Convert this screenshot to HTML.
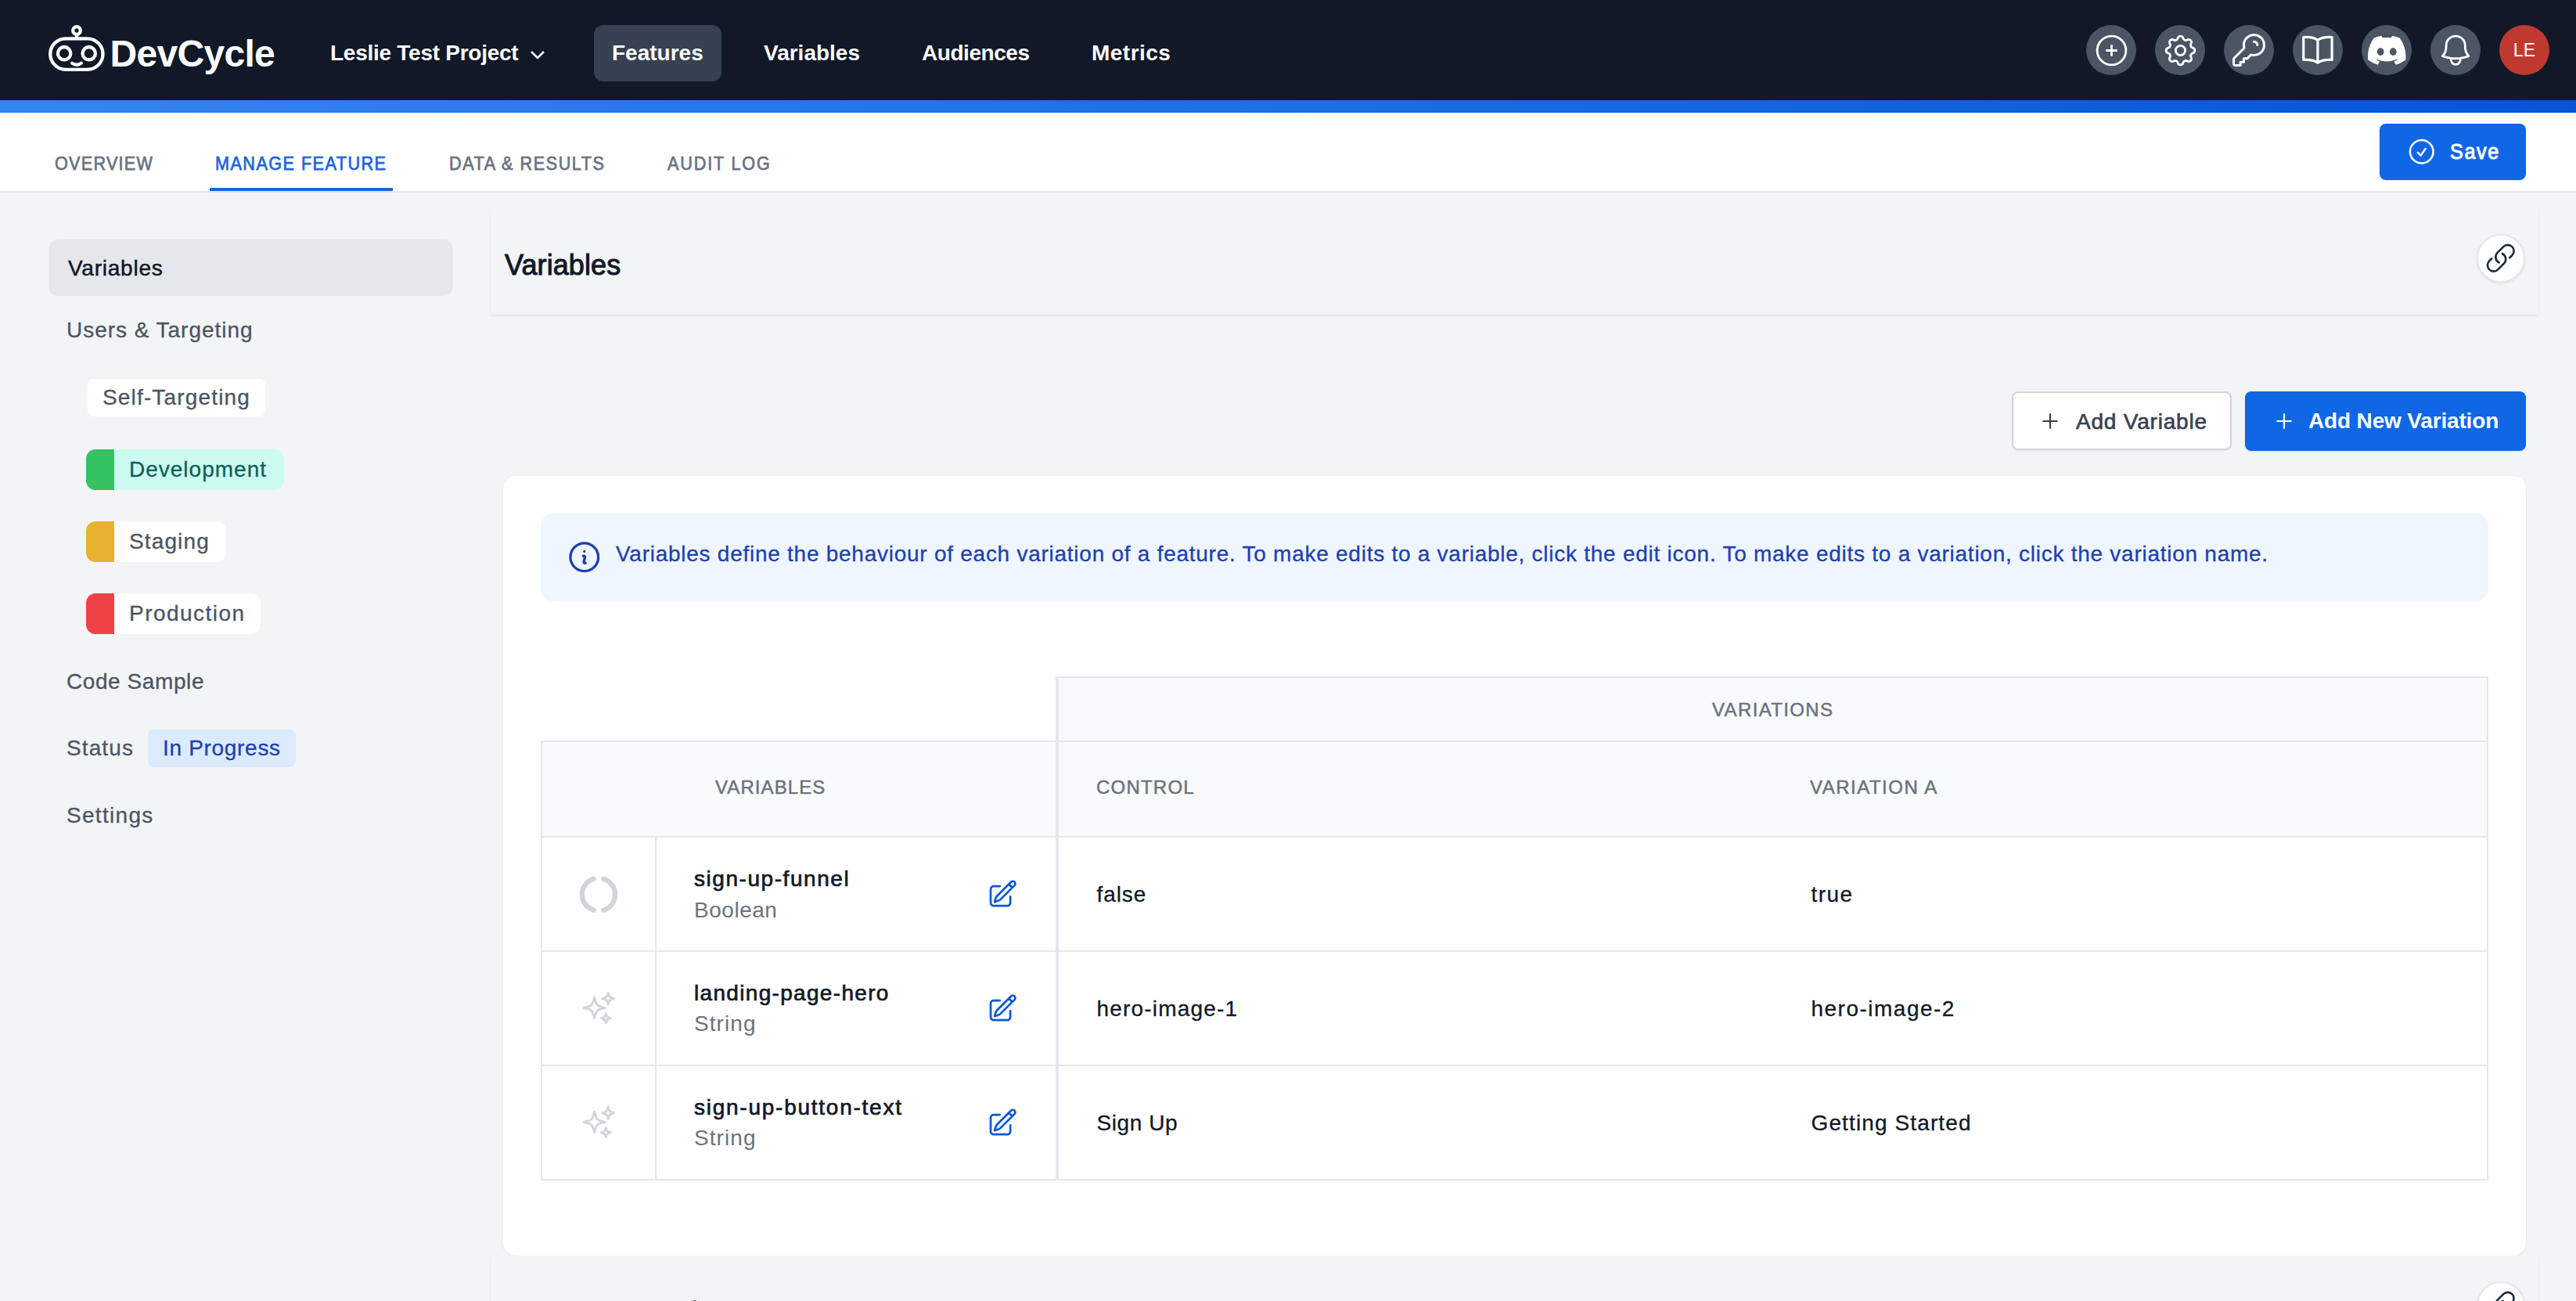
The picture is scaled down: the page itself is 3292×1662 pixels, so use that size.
<!DOCTYPE html>
<html><head><meta charset="utf-8">
<style>
*{box-sizing:border-box;margin:0;padding:0}
html,body{width:3292px;height:1662px;overflow:hidden;background:#f3f4f6;font-family:"Liberation Sans",sans-serif;}
.a{position:absolute}
.t{position:absolute;white-space:nowrap;line-height:1}
svg{position:absolute;overflow:visible}
#nav{left:0;top:0;width:3292px;height:128px;background:#111827}
#bar{left:0;top:128px;width:3292px;height:16px;background:linear-gradient(90deg,#3385ef 0%,#1d6ee1 50%,#0454d5 100%)}
#tabs{left:0;top:144px;width:3292px;height:102px;background:#fff;border-bottom:2px solid #e5e7eb}
.nv{font-size:28px;font-weight:700;color:#fff}
.ic{width:64px;height:64px;border-radius:50%;background:#4b5563;top:32px}
.tab{font-size:24px;font-weight:400;color:#6b7280;-webkit-text-stroke:0.75px currentColor;transform:scaleX(0.9);transform-origin:0 0}
.sb{font-size:28px;color:#4b5563;-webkit-text-stroke:0.3px currentColor}
.env{height:52px;border-radius:12px;background:#fff;overflow:hidden}
.env i{position:absolute;left:0;top:0;bottom:0;width:36px}
.th{font-size:24px;color:#6b7280;-webkit-text-stroke:0.5px currentColor}
.vn{font-size:28px;color:#111827;-webkit-text-stroke:0.7px currentColor}
.vv{font-size:28px;color:#111827;-webkit-text-stroke:0.3px currentColor}
.vt{font-size:28px;color:#6b7280}
.hl{background:#e5e7eb}
.wi{fill:none;stroke:#fff;stroke-linecap:round;stroke-linejoin:round}
</style></head><body>
<!-- NAV -->
<div id="nav" class="a"></div>
<div id="bar" class="a"></div>
<div id="tabs" class="a"></div>

<!-- logo -->
<svg style="left:0;top:0" width="160" height="110" viewBox="0 0 160 110">
  <g fill="none" stroke="#fff" stroke-width="4.3" stroke-linecap="round">
    <circle cx="98" cy="39" r="4.8"/>
    <line x1="98" y1="44" x2="98" y2="49"/>
    <rect x="64.2" y="49.3" width="67.3" height="39.6" rx="19.8"/>
    <circle cx="82.1" cy="68.2" r="8.2"/>
    <circle cx="113.7" cy="68.2" r="8.2"/>
    <path d="M92.2 80.8 Q98 84.6 103.8 80.8"/>
  </g>
</svg>
<div class="t" style="left:140.5px;top:45px;font-size:48px;font-weight:700;color:#fff;letter-spacing:-0.7px">DevCycle</div>

<div class="t nv" style="left:422px;top:54px;letter-spacing:-0.26px">Leslie Test Project</div>
<svg style="left:676px;top:62px" width="22" height="16" viewBox="0 0 22 16"><path d="M3 4 L11 12 L19 4" fill="none" stroke="#fff" stroke-width="2.6"/></svg>
<div class="a" style="left:759px;top:32px;width:163px;height:72px;border-radius:12px;background:#374151"></div>
<div class="t nv" style="left:782px;top:54px">Features</div>
<div class="t nv" style="left:976px;top:54px">Variables</div>
<div class="t nv" style="left:1178px;top:54px;letter-spacing:-0.45px">Audiences</div>
<div class="t nv" style="left:1395px;top:54px;letter-spacing:0.47px">Metrics</div>

<div class="a ic" style="left:2666px"></div>
<div class="a ic" style="left:2754px"></div>
<div class="a ic" style="left:2842px"></div>
<div class="a ic" style="left:2930px"></div>
<div class="a ic" style="left:3018px"></div>
<div class="a ic" style="left:3106px"></div>
<div class="a ic" style="left:3194px;background:#c0392f"></div>
<div class="t" style="left:3194px;top:53px;width:64px;text-align:center;font-size:23px;color:#fff;letter-spacing:0.3px">LE</div>

<!-- nav icons: 24-unit heroicons at scale 2.17 (52px) -->
<svg style="left:2673.5px;top:39.5px" width="49" height="49" viewBox="0 0 24 24"><path class="wi" stroke-width="1.4" d="M12 9v3m0 0v3m0-3h3m-3 0H9m12 0a9 9 0 11-18 0 9 9 0 0118 0z"/></svg>
<svg style="left:2761.5px;top:39.5px" width="49" height="49" viewBox="0 0 24 24"><path class="wi" stroke-width="1.4" d="M10.325 4.317c.426-1.756 2.924-1.756 3.35 0a1.724 1.724 0 002.573 1.066c1.543-.94 3.31.826 2.37 2.37a1.724 1.724 0 001.065 2.572c1.756.426 1.756 2.924 0 3.35a1.724 1.724 0 00-1.066 2.573c.94 1.543-.826 3.31-2.37 2.37a1.724 1.724 0 00-2.572 1.065c-.426 1.756-2.924 1.756-3.35 0a1.724 1.724 0 00-2.573-1.066c-1.543.94-3.31-.826-2.37-2.37a1.724 1.724 0 00-1.065-2.572c-1.756-.426-1.756-2.924 0-3.35a1.724 1.724 0 001.066-2.573c-.94-1.543.826-3.31 2.37-2.37.996.608 2.296.07 2.572-1.065z"/><path class="wi" stroke-width="1.4" d="M15 12a3 3 0 11-6 0 3 3 0 016 0z"/></svg>
<svg style="left:2848px;top:38px" width="52" height="52" viewBox="0 0 24 24"><path class="wi" stroke-width="1.4" d="M15 7a2 2 0 012 2m4 0a6 6 0 01-7.743 5.743L11 17H9v2H7v2H4a1 1 0 01-1-1v-2.586a1 1 0 01.293-.707l5.964-5.964A6 6 0 1121 9z"/></svg>
<svg style="left:2940px;top:44px" width="44" height="40" viewBox="0 0 44 40"><path fill="none" stroke="#fff" stroke-width="3.2" stroke-linejoin="round" d="M3.75 3.5 C11.75 3.0 17.75 3.8 21.9 7.4 C26.05 3.8 32.05 3.0 40.1 3.5 V32.4 C32.05 31.9 26.05 32.7 21.9 36.2 C17.75 32.7 11.75 31.9 3.75 32.4 Z M21.9 7.4 V36.2"/></svg>
<svg style="left:3025.5px;top:40px" width="48.5" height="48.5" viewBox="0 0 24 24"><path fill="#fff" d="M20.317 4.3698a19.7913 19.7913 0 00-4.8851-1.5152.0741.0741 0 00-.0785.0371c-.211.3753-.4447.8648-.6083 1.2495-1.8447-.2762-3.68-.2762-5.4868 0-.1636-.3933-.4058-.8742-.6177-1.2495a.077.077 0 00-.0785-.037 19.7363 19.7363 0 00-4.8852 1.515.0699.0699 0 00-.0321.0277C.5334 9.0458-.319 13.5799.0992 18.0578a.0824.0824 0 00.0312.0561c2.0528 1.5076 4.0413 2.4228 5.9929 3.0294a.0777.0777 0 00.0842-.0276c.4616-.6304.8731-1.2952 1.226-1.9942a.076.076 0 00-.0416-.1057c-.6528-.2476-1.2743-.5495-1.8722-.8923a.077.077 0 01-.0076-.1277c.1258-.0943.2517-.1923.3718-.2914a.0743.0743 0 01.0776-.0105c3.9278 1.7933 8.18 1.7933 12.0614 0a.0739.0739 0 01.0785.0095c.1202.099.246.1981.3728.2924a.077.077 0 01-.0066.1276 12.2986 12.2986 0 01-1.873.8914.0766.0766 0 00-.0407.1067c.3604.698.7719 1.3628 1.225 1.9932a.076.076 0 00.0842.0286c1.961-.6067 3.9495-1.5219 6.0023-3.0294a.077.077 0 00.0313-.0552c.5004-5.177-.8382-9.6739-3.5485-13.6604a.061.061 0 00-.0312-.0286zM8.02 15.3312c-1.1825 0-2.1569-1.0857-2.1569-2.419 0-1.3332.9555-2.4189 2.157-2.4189 1.2108 0 2.1757 1.0952 2.1568 2.419 0 1.3332-.9555 2.4189-2.1569 2.4189zm7.9748 0c-1.1825 0-2.1569-1.0857-2.1569-2.419 0-1.3332.9554-2.4189 2.1569-2.4189 1.2108 0 2.1757 1.0952 2.1568 2.419 0 1.3332-.946 2.4189-2.1568 2.4189z"/></svg>
<svg style="left:3113.6px;top:39.6px" width="48.4" height="48.4" viewBox="0 0 24 24"><path class="wi" stroke-width="1.4" d="M14.857 17.082a23.848 23.848 0 0 0 5.454-1.31A8.967 8.967 0 0 1 18 9.75V9A6 6 0 0 0 6 9v.75a8.967 8.967 0 0 1-2.312 6.022c1.733.64 3.56 1.085 5.455 1.31m5.714 0a24.255 24.255 0 0 1-5.714 0m5.714 0a3 3 0 1 1-5.714 0"/></svg>

<!-- TABS -->
<div class="t tab" style="left:70px;top:197px;letter-spacing:1.41px">OVERVIEW</div>
<div class="t tab" style="left:275px;top:197px;color:#1d64d8;letter-spacing:1.64px">MANAGE FEATURE</div>
<div class="t tab" style="left:574px;top:197px;letter-spacing:1.74px">DATA &amp; RESULTS</div>
<div class="t tab" style="left:853px;top:197px;letter-spacing:2.05px">AUDIT LOG</div>
<div class="a" style="left:268px;top:240px;width:234px;height:4px;background:#1d64d8"></div>

<div class="a" style="left:3041px;top:158px;width:187px;height:72px;border-radius:8px;background:#0f67e6;box-shadow:0 1px 2px rgba(0,0,0,0.08)"></div>
<svg style="left:3075.25px;top:174.25px" width="39.5" height="39.5" viewBox="0 0 24 24"><path class="wi" stroke-width="1.52" d="M9 12.75 11.25 15 15 9.75M21 12a9 9 0 1 1-18 0 9 9 0 0 1 18 0Z"/></svg>
<div class="t" style="left:3131px;top:180px;font-size:28px;font-weight:400;color:#fff;letter-spacing:1.83px;-webkit-text-stroke:1px #fff;transform:scaleX(0.9);transform-origin:0 0">Save</div>

<!-- SIDEBAR -->
<div class="a" style="left:62px;top:306px;width:517px;height:72px;border-radius:12px;background:#e5e7eb"></div>
<div class="t sb" style="left:87px;top:329px;color:#111827;letter-spacing:0.76px;-webkit-text-stroke:0.5px #111827">Variables</div>
<div class="t sb" style="left:85px;top:408px;letter-spacing:0.97px">Users &amp; Targeting</div>
<div class="a" style="left:112px;top:484px;width:227px;height:48px;border-radius:8px;background:#fff"></div>
<div class="t sb" style="left:131px;top:494px;letter-spacing:1.16px">Self-Targeting</div>
<div class="a env" style="left:110px;top:574px;width:253px;background:#ccfbf1"><i style="background:#34c263"></i></div>
<div class="t sb" style="left:165px;top:586px;color:#115e59;letter-spacing:1px">Development</div>
<div class="a env" style="left:110px;top:666px;width:179px"><i style="background:#e8b130"></i></div>
<div class="t sb" style="left:165px;top:678px;letter-spacing:1.13px">Staging</div>
<div class="a env" style="left:110px;top:758px;width:223px"><i style="background:#ef4146"></i></div>
<div class="t sb" style="left:165px;top:770px;letter-spacing:1.46px">Production</div>
<div class="t sb" style="left:85px;top:857px;letter-spacing:0.58px">Code Sample</div>
<div class="t sb" style="left:85px;top:942px;letter-spacing:1.1px">Status</div>
<div class="a" style="left:189px;top:932px;width:189px;height:48px;border-radius:8px;background:#dbeafe"></div>
<div class="t sb" style="left:208px;top:942px;color:#1e40af;letter-spacing:0.69px">In Progress</div>
<div class="t sb" style="left:85px;top:1028px;letter-spacing:1.31px">Settings</div>

<!-- MAIN -->
<div class="a" style="left:627px;top:266px;width:2617px;height:136px;background:#f3f4f6;box-shadow:0 2px 3px rgba(0,0,0,0.06)"></div>
<div class="t" style="left:645px;top:321px;font-size:36px;color:#111827;letter-spacing:0.1px;-webkit-text-stroke:1px #111827">Variables</div>
<div class="a" style="left:3165px;top:299px;width:62px;height:62px;border-radius:50%;background:#fff;border:2px solid #e5e7eb;box-shadow:0 1px 3px rgba(0,0,0,0.1)"></div>
<svg style="left:3175.25px;top:308.95px" width="41.5" height="41.5" viewBox="0 0 24 24"><path fill="none" stroke="#1f2937" stroke-width="1.5" stroke-linecap="round" stroke-linejoin="round" d="M13.19 8.688a4.5 4.5 0 0 1 1.242 7.244l-4.5 4.5a4.5 4.5 0 0 1-6.364-6.364l1.757-1.757m13.35-.622 1.757-1.757a4.5 4.5 0 0 0-6.364-6.364l-4.5 4.5a4.5 4.5 0 0 0 1.242 7.244"/></svg>

<div class="a" style="left:2571px;top:500px;width:281px;height:75px;border-radius:8px;background:#fff;border:2px solid #d1d5db;box-shadow:0 1px 2px rgba(0,0,0,0.05)"></div>
<svg style="left:2608px;top:526px" width="24" height="24" viewBox="0 0 24 24"><path d="M12 3.2v17.6M3.2 12h17.6" stroke="#374151" stroke-width="2.2" stroke-linecap="round"/></svg>
<div class="t" style="left:2653px;top:524.5px;font-size:28px;color:#374151;letter-spacing:0.8px;-webkit-text-stroke:0.65px #374151">Add Variable</div>
<div class="a" style="left:2869px;top:500px;width:359px;height:76px;border-radius:8px;background:#0f67e6;box-shadow:0 1px 2px rgba(0,0,0,0.08)"></div>
<svg style="left:2907px;top:526px" width="24" height="24" viewBox="0 0 24 24"><path d="M12 3.2v17.6M3.2 12h17.6" stroke="#fff" stroke-width="2.2" stroke-linecap="round"/></svg>
<div class="t" style="left:2950px;top:524px;font-size:28px;font-weight:700;color:#fff;letter-spacing:-0.16px">Add New Variation</div>

<div class="a" style="left:643px;top:608px;width:2585px;height:996px;border-radius:16px;background:#fff;box-shadow:0 1px 3px rgba(0,0,0,0.08)"></div>
<div class="a" style="left:691px;top:656px;width:2489px;height:112px;border-radius:16px;background:#eff6ff"></div>
<svg style="left:723.2px;top:687.9px" width="47.6" height="47.6" viewBox="0 0 24 24"><path fill="none" stroke="#1e40af" stroke-width="1.66" stroke-linecap="round" stroke-linejoin="round" d="m11.25 11.25.041-.02a.75.75 0 0 1 1.063.852l-.708 2.836a.75.75 0 0 0 1.063.853l.041-.021M21 12a9 9 0 1 1-18 0 9 9 0 0 1 18 0Zm-9-3.75h.008v.008H12V8.25Z"/></svg>
<div class="t" style="left:787px;top:694px;font-size:28px;color:#1e40af;letter-spacing:0.74px;-webkit-text-stroke:0.3px #1e40af">Variables define the behaviour of each variation of a feature. To make edits to a variable, click the edit icon. To make edits to a variation, click the variation name.</div>

<!-- TABLE -->
<div class="a" style="left:1349px;top:864px;width:1831px;height:84px;background:#f9fafb;border:2px solid #e5e7eb;border-bottom:none"></div>
<div class="a" style="left:691px;top:946px;width:2489px;height:124px;background:#f9fafb;border:2px solid #e5e7eb"></div>
<div class="a" style="left:691px;top:1068px;width:2489px;height:440px;border:2px solid #e5e7eb;border-top:none"></div>
<div class="a hl" style="left:691px;top:1214px;width:2489px;height:2px"></div>
<div class="a hl" style="left:691px;top:1360px;width:2489px;height:2px"></div>
<div class="a hl" style="left:837px;top:1068px;width:2px;height:440px"></div>
<div class="a hl" style="left:1349px;top:864px;width:4px;height:644px"></div>

<div class="t th" style="left:2188px;top:895px;letter-spacing:1.36px">VARIATIONS</div>
<div class="t th" style="left:914px;top:994px;letter-spacing:1.09px">VARIABLES</div>
<div class="t th" style="left:1401px;top:994px;letter-spacing:1.22px">CONTROL</div>
<div class="t th" style="left:2313px;top:994px;letter-spacing:1.5px">VARIATION A</div>

<!-- row icons -->
<svg style="left:741px;top:1119px" width="48" height="48" viewBox="0 0 48 48"><g fill="none" stroke="#d1d5db" stroke-width="6.4" stroke-linecap="round"><path d="M17.6 3.9 A20.8 20.8 0 0 0 17.6 43.7"/><path d="M30.4 3.9 A20.8 20.8 0 0 1 30.4 43.7"/></g></svg>
<svg style="left:741.5px;top:1264.4px" width="47" height="47" viewBox="0 0 24 24"><path fill="none" stroke="#d1d5db" stroke-width="1.5" stroke-linecap="round" stroke-linejoin="round" d="M9.813 15.904 9 18.75l-.813-2.846a4.5 4.5 0 0 0-3.09-3.09L2.25 12l2.846-.813a4.5 4.5 0 0 0 3.09-3.09L9 5.25l.813 2.846a4.5 4.5 0 0 0 3.09 3.09L15.75 12l-2.846.813a4.5 4.5 0 0 0-3.09 3.09ZM18.259 8.715 18 9.75l-.259-1.035a3.375 3.375 0 0 0-2.455-2.456L14.25 6l1.036-.259a3.375 3.375 0 0 0 2.455-2.456L18 2.25l.259 1.035a3.375 3.375 0 0 0 2.456 2.456L21.75 6l-1.035.259a3.375 3.375 0 0 0-2.456 2.456ZM16.894 20.567 16.5 21.75l-.394-1.183a2.25 2.25 0 0 0-1.423-1.423L13.5 18.75l1.183-.394a2.25 2.25 0 0 0 1.423-1.423l.394-1.183.394 1.183a2.25 2.25 0 0 0 1.423 1.423l1.183.394-1.183.394a2.25 2.25 0 0 0-1.423 1.423Z"/></svg>
<svg style="left:741.5px;top:1410.2px" width="47" height="47" viewBox="0 0 24 24"><path fill="none" stroke="#d1d5db" stroke-width="1.5" stroke-linecap="round" stroke-linejoin="round" d="M9.813 15.904 9 18.75l-.813-2.846a4.5 4.5 0 0 0-3.09-3.09L2.25 12l2.846-.813a4.5 4.5 0 0 0 3.09-3.09L9 5.25l.813 2.846a4.5 4.5 0 0 0 3.09 3.09L15.75 12l-2.846.813a4.5 4.5 0 0 0-3.09 3.09ZM18.259 8.715 18 9.75l-.259-1.035a3.375 3.375 0 0 0-2.455-2.456L14.25 6l1.036-.259a3.375 3.375 0 0 0 2.455-2.456L18 2.25l.259 1.035a3.375 3.375 0 0 0 2.456 2.456L21.75 6l-1.035.259a3.375 3.375 0 0 0-2.456 2.456ZM16.894 20.567 16.5 21.75l-.394-1.183a2.25 2.25 0 0 0-1.423-1.423L13.5 18.75l1.183-.394a2.25 2.25 0 0 0 1.423-1.423l.394-1.183.394 1.183a2.25 2.25 0 0 0 1.423 1.423l1.183.394-1.183.394a2.25 2.25 0 0 0-1.423 1.423Z"/></svg>

<svg style="left:1260.7px;top:1121.7px" width="40.2" height="40.2" viewBox="0 0 24 24"><path fill="none" stroke="#0b57d5" stroke-width="1.62" stroke-linecap="round" stroke-linejoin="round" d="m16.862 4.487 1.687-1.688a1.875 1.875 0 1 1 2.652 2.652L10.582 16.07a4.5 4.5 0 0 1-1.897 1.13L6 18l.8-2.685a4.5 4.5 0 0 1 1.13-1.897l8.932-8.931Zm0 0L19.5 7.125M18 14v4.75A2.25 2.25 0 0 1 15.75 21H5.25A2.25 2.25 0 0 1 3 18.75V8.25A2.25 2.25 0 0 1 5.25 6H10"/></svg>
<svg style="left:1260.7px;top:1267.7px" width="40.2" height="40.2" viewBox="0 0 24 24"><path fill="none" stroke="#0b57d5" stroke-width="1.62" stroke-linecap="round" stroke-linejoin="round" d="m16.862 4.487 1.687-1.688a1.875 1.875 0 1 1 2.652 2.652L10.582 16.07a4.5 4.5 0 0 1-1.897 1.13L6 18l.8-2.685a4.5 4.5 0 0 1 1.13-1.897l8.932-8.931Zm0 0L19.5 7.125M18 14v4.75A2.25 2.25 0 0 1 15.75 21H5.25A2.25 2.25 0 0 1 3 18.75V8.25A2.25 2.25 0 0 1 5.25 6H10"/></svg>
<svg style="left:1260.7px;top:1413.7px" width="40.2" height="40.2" viewBox="0 0 24 24"><path fill="none" stroke="#0b57d5" stroke-width="1.62" stroke-linecap="round" stroke-linejoin="round" d="m16.862 4.487 1.687-1.688a1.875 1.875 0 1 1 2.652 2.652L10.582 16.07a4.5 4.5 0 0 1-1.897 1.13L6 18l.8-2.685a4.5 4.5 0 0 1 1.13-1.897l8.932-8.931Zm0 0L19.5 7.125M18 14v4.75A2.25 2.25 0 0 1 15.75 21H5.25A2.25 2.25 0 0 1 3 18.75V8.25A2.25 2.25 0 0 1 5.25 6H10"/></svg>

<div class="t vn" style="left:887px;top:1109px;letter-spacing:1.55px">sign-up-funnel</div>
<div class="t vt" style="left:887px;top:1149px;letter-spacing:0.53px">Boolean</div>
<div class="t vn" style="left:887px;top:1255px;letter-spacing:1.32px">landing-page-hero</div>
<div class="t vt" style="left:887px;top:1294px;letter-spacing:1.08px">String</div>
<div class="t vn" style="left:887px;top:1401px;letter-spacing:1.75px">sign-up-button-text</div>
<div class="t vt" style="left:887px;top:1440px;letter-spacing:1.08px">String</div>

<div class="t vv" style="left:1401.5px;top:1129px;letter-spacing:0.9px">false</div>
<div class="t vv" style="left:2314.5px;top:1129px;letter-spacing:1.47px">true</div>
<div class="t vv" style="left:1401.5px;top:1275px;letter-spacing:1.18px">hero-image-1</div>
<div class="t vv" style="left:2314.5px;top:1275px;letter-spacing:1.49px">hero-image-2</div>
<div class="t vv" style="left:1401.5px;top:1421px;letter-spacing:0.57px">Sign Up</div>
<div class="t vv" style="left:2314.5px;top:1421px;letter-spacing:1.12px">Getting Started</div>

<!-- next section -->
<div class="a" style="left:627px;top:1604px;width:2617px;height:100px;background:#f3f4f6;box-shadow:0 2px 3px rgba(0,0,0,0.06)"></div>
<div class="t" style="left:645px;top:1659px;font-size:36px;color:#111827;letter-spacing:0.1px;-webkit-text-stroke:1px #111827">Users &amp; Targeting</div>
<div class="a" style="left:3165px;top:1637px;width:62px;height:62px;border-radius:50%;background:#fff;border:2px solid #e5e7eb;box-shadow:0 1px 3px rgba(0,0,0,0.1)"></div>
<svg style="left:3175.25px;top:1646.95px" width="41.5" height="41.5" viewBox="0 0 24 24"><path fill="none" stroke="#1f2937" stroke-width="1.5" stroke-linecap="round" stroke-linejoin="round" d="M13.19 8.688a4.5 4.5 0 0 1 1.242 7.244l-4.5 4.5a4.5 4.5 0 0 1-6.364-6.364l1.757-1.757m13.35-.622 1.757-1.757a4.5 4.5 0 0 0-6.364-6.364l-4.5 4.5a4.5 4.5 0 0 0 1.242 7.244"/></svg>

</body></html>
